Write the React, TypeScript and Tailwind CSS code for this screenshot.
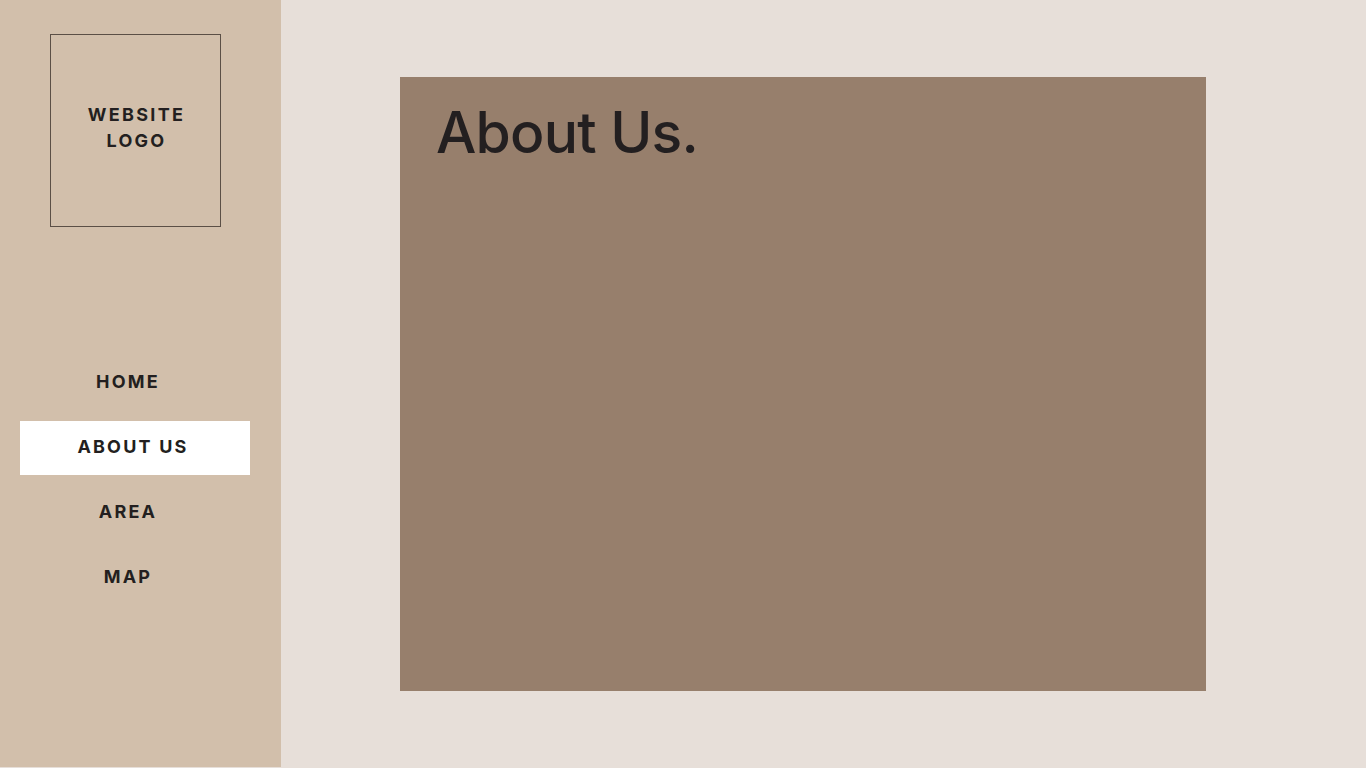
const navItems = ['HOME', 'ABOUT US', 'AREA', 'MAP'];

export default function App() {
  const active = 'ABOUT US';

  return (
    <div className="flex h-[768px] w-[1366px] bg-[#e7dfd9] font-['Inter',sans-serif] text-[#231f20]">
      {/* Sidebar */}
      <aside className="flex h-[767px] w-[281px] shrink-0 flex-col bg-[#d2bfab]">
        <div className="ml-[50px] mt-[34px] flex h-[193px] w-[171px] items-center justify-center border border-[#5b4f46]">
          <p className="-mt-[5px] ml-[2px] text-center text-[18px] font-bold leading-[26px] tracking-[2.3px]">
            WEBSITE
            <br />
            LOGO
          </p>
        </div>

        <nav className="ml-[20px] mt-[129px] flex w-[230px] flex-col gap-[11px]">
          {navItems.map((item) =>
            item === active ? (
              <div key={item} className="flex h-[54px] items-center justify-center bg-white pb-[3px] pr-[4px] text-[18px] font-bold tracking-[2.2px]">
                {item}
              </div>
            ) : (
              <div key={item} className="flex h-[54px] items-center justify-center pb-[3px] pr-[14px] text-[18px] font-bold tracking-[2.2px]">
                {item}
              </div>
            )
          )}
        </nav>
      </aside>

      {/* Main */}
      <main className="flex-1 pl-[119px] pt-[77px]">
        <section className="h-[614px] w-[806px] bg-[#977f6c] pl-[36px] pt-[20px]">
          <h1 className="text-[57px] font-medium leading-[72px] tracking-[-0.8px]">About Us.</h1>
        </section>
      </main>
    </div>
  );
}
